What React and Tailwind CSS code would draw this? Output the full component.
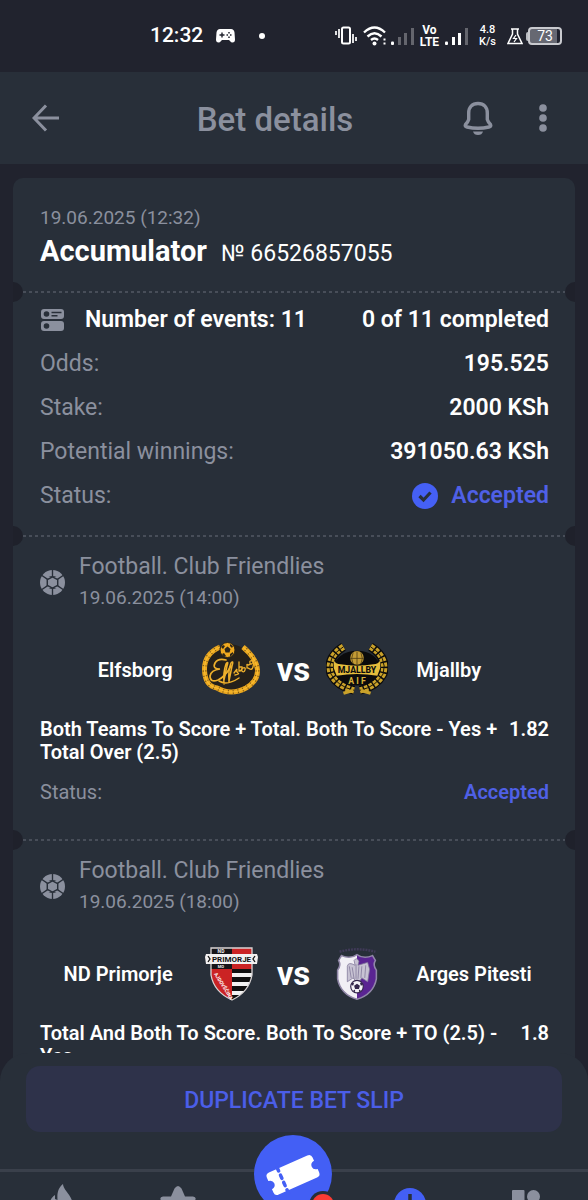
const summary = [
  { label: "Odds:", value: "195.525" },
  { label: "Stake:", value: "2000 KSh" },
  { label: "Potential winnings:", value: "391050.63 KSh" },
];

const events = [
  {
    league: "Football. Club Friendlies",
    date: "19.06.2025 (14:00)",
    home: "Elfsborg",
    away: "Mjallby",
    HomeLogo: ElfsborgLogo,
    AwayLogo: MjallbyLogo,
    market: "Both Teams To Score + Total. Both To Score - Yes + Total Over (2.5)",
    odds: "1.82",
    status: "Accepted",
  },
  {
    league: "Football. Club Friendlies",
    date: "19.06.2025 (18:00)",
    home: "ND Primorje",
    away: "Arges Pitesti",
    HomeLogo: PrimorjeLogo,
    AwayLogo: ArgesLogo,
    market: "Total And Both To Score. Both To Score + TO (2.5) - Yes",
    odds: "1.8",
    status: "Accepted",
  },
];

export default function App() {
  return (
    <div className="flex h-screen flex-col overflow-hidden bg-[#21232e] font-[Roboto,sans-serif] text-white">
      <StatusBar />
      <Header />
      <main className="min-h-0 flex-1 overflow-y-auto px-[13px] pt-[14px] [scrollbar-width:none]">
        <div className="rounded-t-[10px] bg-[#282f39]">
          <section className="pt-[27px] pr-[26px] pb-5 pl-[27px]">
            <div className="text-[19px] leading-[26px] text-[#8b909e]">
              19.06.2025 (12:32)
            </div>
            <div className="mt-0.5 flex items-baseline gap-[14px] leading-9">
              <h2 className="text-[29px] font-bold">Accumulator</h2>
              <span className="text-[23px]">№ 66526857055</span>
            </div>
          </section>
          <Divider />
          <section className="flex flex-col gap-4 pt-[14px] pr-[26px] pb-[26px] pl-[27px] text-[23px] leading-7">
            <div className="flex items-center justify-between font-semibold">
              <div className="flex items-center gap-[19px]">
                <EventsIcon />
                <span>Number of events: 11</span>
              </div>
              <span>0 of 11 completed</span>
            </div>
            {summary.map((row) => (
              <div key={row.label} className="flex justify-between">
                <span className="text-[#8b909e]">{row.label}</span>
                <span className="font-semibold">{row.value}</span>
              </div>
            ))}
            <div className="flex justify-between">
              <span className="text-[#8b909e]">Status:</span>
              <span className="flex items-center gap-[13px] font-semibold text-[#4f60e6]">
                <CheckIcon />
                Accepted
              </span>
            </div>
          </section>
          {events.map((event) => (
            <EventCard key={event.date} event={event} />
          ))}
        </div>
      </main>
      <Footer />
    </div>
  );
}

function Divider() {
  return (
    <div className="relative h-0">
      <div className="absolute -top-px right-[10px] left-[10px] h-[2px] bg-[repeating-linear-gradient(90deg,#484e59_0_3px,transparent_3px_6px)]" />
      <div className="absolute -top-[10px] left-0 h-5 w-[10px] rounded-r-full bg-[#1f212b]" />
      <div className="absolute -top-[10px] right-0 h-5 w-[10px] rounded-l-full bg-[#1f212b]" />
    </div>
  );
}

function EventCard({ event }) {
  const { HomeLogo, AwayLogo } = event;
  return (
    <>
      <Divider />
      <section className="pt-[17px] pr-[26px] pb-9 pl-[27px]">
        <div className="flex items-center gap-[14px] text-[#8b909e]">
          <BallIcon />
          <div>
            <div className="text-[23px] leading-7">{event.league}</div>
            <div className="mt-1 text-[19px] leading-[26px]">{event.date}</div>
          </div>
        </div>
        <div className="mt-[27px] grid h-16 grid-cols-[1fr_auto_1fr] items-center gap-7 text-[20px] font-semibold">
          <span className="text-right">{event.home}</span>
          <div className="flex items-center gap-4">
            <HomeLogo />
            <span className="text-[33px] leading-8 font-bold">vs</span>
            <AwayLogo />
          </div>
          <span>{event.away}</span>
        </div>
        <div className="mt-4 flex justify-between gap-2 text-[20px] leading-[23px] font-semibold">
          <p>{event.market}</p>
          <span>{event.odds}</span>
        </div>
        <div className="mt-4 flex justify-between text-[20px] leading-6">
          <span className="text-[#8b909e]">Status:</span>
          <span className="font-semibold text-[#4f60e6]">{event.status}</span>
        </div>
      </section>
    </>
  );
}

function Header() {
  return (
    <header className="flex h-[92px] shrink-0 items-center bg-[#282f39] pr-10 pl-8 text-[#8b909e]">
      <button type="button" aria-label="Back">
        <svg width="28" height="30" viewBox="0 0 28 30" fill="none" stroke="currentColor" strokeWidth="3">
          <path d="M14 2.500 2 15l12 12.500M2 15h25" />
        </svg>
      </button>
      <h1 className="ml-7 flex-1 pt-[3px] text-center text-[33px] leading-10 font-medium">
        Bet details
      </h1>
      <button type="button" aria-label="Notifications">
        <svg width="32" height="34" viewBox="0 0 32 34" fill="none">
          <path
            d="M16 2.500c-6 0-9.300 4-9.300 9.500v6.500Q6 21 3.500 23.500q-1 2 1.500 2.500 11 2.500 22 0 2.500-.5 1.500-2.500Q26 21 25.300 18.500V12c0-5.500-3.300-9.500-9.300-9.500Z"
            stroke="currentColor"
            strokeWidth="3.400"
            strokeLinejoin="round"
          />
          <path d="M11 30.500h10q-1 3.500-5 3.500t-5-3.500Z" fill="currentColor" />
        </svg>
      </button>
      <button type="button" aria-label="More" className="ml-11">
        <svg width="10" height="28" viewBox="0 0 10 28" fill="currentColor">
          <circle cx="5" cy="4" r="3.800" />
          <circle cx="5" cy="14" r="3.800" />
          <circle cx="5" cy="24" r="3.800" />
        </svg>
      </button>
    </header>
  );
}

function StatusBar() {
  return (
    <div className="flex h-[72px] shrink-0 items-center justify-between pr-[26px] pl-[150px]">
      <div className="flex items-center">
        <span className="text-[21px] font-medium">12:32</span>
        <svg className="ml-[13px]" width="19" height="14" viewBox="0 0 19 14">
          <path d="M4 0h11q3 0 3.500 3.500l.5 7q0 3-2.500 3-1.500 0-2.500-1.500l-1-1h-7L5 12q-1 1.500-2.500 1.500-2.500 0-2.500-3l.5-7Q1 0 4 0Z" fill="#fff" />
          <path d="M6 3.500v5M3.500 6h5" stroke="#21232e" strokeWidth="1.400" />
          <path d="M13 3v1.500M13 7.500V9M10.500 6H12M14 6h1.500" stroke="#21232e" strokeWidth="1.500" />
        </svg>
        <span className="ml-6 size-[6px] rounded-full bg-white" />
      </div>
      <div className="flex items-center">
        <svg width="22" height="20" viewBox="0 0 22 20" fill="none" stroke="#fff">
          <rect x="7" y="1.500" width="8" height="16" rx="1.500" strokeWidth="2" />
          <path d="M1 5v4M4 3v9M18 8v9M21 11v4" strokeWidth="1.700" />
        </svg>
        <svg className="ml-[6px]" width="25" height="20" viewBox="0 0 25 20" fill="none" stroke="#fff" strokeWidth="2.400">
          <path d="M1 6.500q10.500-10 21 0M4.500 10.500q7-6.500 14 0M8 14q3.500-3 7 0" />
          <circle cx="11.500" cy="17.500" r="2" fill="#fff" stroke="none" />
          <path d="M20.500 13.500h2M20.500 17.500h2" strokeWidth="2" />
        </svg>
        <Signal active={1} className="ml-[3px]" />
        <div className="ml-[6px] text-center text-[12px] leading-3 font-bold">
          <div>Vo</div>
          <div>LTE</div>
        </div>
        <Signal active={3} className="ml-[6px]" />
        <div className="ml-[11px] text-center text-[11px] leading-3 font-medium">
          <div>4.8</div>
          <div>K/s</div>
        </div>
        <svg className="ml-[11px]" width="16" height="17" viewBox="0 0 16 17" fill="none" stroke="#fff" strokeWidth="1.500">
          <path d="M4 1h8M5.500 1v5L1 15.500h14L10.500 6V1" />
          <path d="m9 7-2.500 3.500h3L7 14" strokeWidth="1.200" />
        </svg>
        <span className="ml-[3px] h-[9px] w-[2px] rounded-l bg-[#b9bbc1]" />
        <div className="flex h-[18px] w-[34px] items-center justify-center rounded-[4px] border-2 border-[#c9cacf] bg-linear-to-r from-[#666872] from-90% to-transparent to-90% text-[14px]">
          73
        </div>
      </div>
    </div>
  );
}

function Signal({ active, className }) {
  return (
    <svg className={className} width="23" height="18" viewBox="0 0 23 18" fill="#fff">
      <rect x="0" y="14.500" width="3" height="3.500" rx="1" />
      <rect x="7" y="10" width="3" height="8" opacity={active > 1 ? 1 : 0.3} />
      <rect x="13" y="6" width="3" height="12" opacity={active > 2 ? 1 : 0.3} />
      <rect x="20" y="1" width="3" height="17" opacity="0.3" />
    </svg>
  );
}

function Footer() {
  return (
    <footer className="relative -mt-7 shrink-0 text-[#8b909e]">
      <div className="rounded-t-[28px] bg-[#282f39] px-[26px] pt-[13px] pb-[37px]">
        <button
          type="button"
          className="h-[66px] w-full rounded-[14px] bg-[#2e324a] pt-1 text-[23px] font-medium text-[#4b5ee8]"
        >
          DUPLICATE BET SLIP
        </button>
      </div>
      <nav className="grid h-[31px] grid-cols-5 justify-items-center border-t-[3px] border-[#3a404b] bg-[#282f39] px-1">
        <a href="#popular" aria-label="Popular" className="h-7 overflow-hidden pt-3">
          <svg width="30" height="36" viewBox="0 0 30 36" fill="currentColor">
            <path d="M16 0c-5 4-6 9-5.500 16L8 15V11c-4 3-6 7-6 12 0 7 5 11 12 11s12-5 12-12C26 12 16 6 16 0Z" />
          </svg>
        </a>
        <a href="#favorites" aria-label="Favorites" className="h-7 overflow-hidden pt-[14px]">
          <svg width="38" height="36" viewBox="0 0 38 36" fill="currentColor">
            <path d="M15.500 2.500q3.500-5 7 0L26 10.500h8q4 .5 2 4l-8 6.500 3 11-12-6-12 6 3-11-8-6.500q-2-3.500 2-4h8Z" />
          </svg>
        </a>
        <a
          href="#slip"
          aria-label="Bet slip"
          className="relative -mt-[37px] h-[65px] w-20 overflow-hidden"
        >
          <svg width="80" height="80" viewBox="0 0 80 80">
            <circle cx="39" cy="39" r="39" fill="#435ff5" />
            <g transform="rotate(-24 39 40)">
              <path d="M18 28h42q4 0 4 4v3.500q-4.500.5-4.500 4.500t4.500 4.500V48q0 4-4 4H18q-4 0-4-4v-3.500q4.500-.5 4.500-4.500T14 35.500V32q0-4 4-4Z" fill="#fff" />
              <path d="M27.500 27v28" stroke="#435ff5" strokeWidth="3.500" strokeDasharray="3.500 4.500" strokeLinecap="round" />
            </g>
            <circle cx="69" cy="70" r="14" fill="#282f39" />
            <circle cx="69" cy="70" r="11" fill="#fb3b34" />
          </svg>
        </a>
        <a href="#history" aria-label="History" className="h-7 overflow-hidden pt-4">
          <svg width="32" height="32" viewBox="0 0 32 32">
            <circle cx="16" cy="16" r="16" fill="#435ff5" />
            <path d="M16 6v11l7 5" stroke="#282f39" strokeWidth="3.500" fill="none" />
          </svg>
        </a>
        <a href="#menu" aria-label="Menu" className="h-7 overflow-hidden pt-[18px]">
          <svg width="28" height="28" viewBox="0 0 28 28" fill="currentColor">
            <rect width="12.500" height="12.500" rx="1" />
            <circle cx="21.500" cy="6.500" r="6.500" />
            <rect y="15" width="12.500" height="12.500" rx="1" />
            <rect x="15" y="15" width="12.500" height="12.500" rx="1" />
          </svg>
        </a>
      </nav>
    </footer>
  );
}

function EventsIcon() {
  return (
    <svg width="26" height="24" viewBox="0 0 26 24">
      <rect x="1" y="1" width="23" height="10" rx="3" fill="#8b909e" />
      <rect x="1" y="13" width="23" height="10" rx="3" fill="#8b909e" />
      <circle cx="6.500" cy="6" r="2.800" fill="#282f39" />
      <circle cx="6.500" cy="18" r="2.800" fill="#282f39" />
      <path d="M11.500 4.500h10M11.500 7.700h6" stroke="#282f39" strokeWidth="1.600" />
    </svg>
  );
}

function CheckIcon() {
  return (
    <svg width="26" height="26" viewBox="0 0 26 26">
      <circle cx="13" cy="13" r="13" fill="#4560f5" />
      <path d="m7.500 13 4 4 7-7.500" fill="none" stroke="#282f39" strokeWidth="3.200" />
    </svg>
  );
}

function BallIcon() {
  return (
    <svg width="25" height="25" viewBox="0 0 24 24">
      <circle cx="12" cy="12" r="12" fill="#8b909e" />
      <path d="M12 0v7M12 17v7M16 9.500 22.500 5M8 9.500 1.500 5M16 14.500l6.500 4.500M8 14.500 1.500 19" stroke="#282f39" strokeWidth="1.300" />
      <path d="m12 7.500-3.800-1.500h7.600ZM12 16.500l-3.800 1.500h7.600Z" fill="#282f39" />
      <path d="M12 6.500 17 9.300v5.400L12 17.500l-5-2.800V9.300Z" fill="#8b909e" stroke="#282f39" strokeWidth="1.400" />
    </svg>
  );
}

function ElfsborgLogo() {
  return (
    <svg width="60" height="56" viewBox="0 0 60 56">
      <path d="M11 11Q30-6 49 11 62 24 56 36 47 52 30 51 13 52 4 36-2 24 11 11Z" fill="#24201b" />
      <path d="M19 5Q3 12 3.500 28T16 46Q30 54 45 46 57 39 56.500 28T42 5" fill="none" stroke="#eba820" strokeWidth="5" />
      <path d="M19 5Q3 12 3.500 28T16 46Q30 54 45 46 57 39 56.500 28T42 5" fill="none" stroke="#7c5614" strokeWidth="4" strokeDasharray="1 4" />
      <path d="M19 5Q3 12 3.500 28T16 46Q30 54 45 46 57 39 56.500 28T42 5" fill="none" stroke="#f9bb30" strokeWidth="1.200" />
      <circle cx="26.500" cy="8" r="7.500" fill="#efa91f" stroke="#2b2418" />
      <path d="m26.500 4.500 3 2.500-1 3.500h-4l-1-3.500ZM20 5l2-2 2 1-2 3ZM29 2l3 2-1 2-2-2ZM21 12l2-1 2 3-2 1ZM29 12l3-2v2l-3 3Z" fill="#2b2418" />
      <g fill="none" stroke="#eeb02c" strokeLinecap="round">
        <path d="M25 18q-8-2-11 3-3 6 5 6-9 1-10 7 0 7 8 4 7-3 13-14" strokeWidth="1.700" />
        <path d="M23 42q-1-12 2-20 3-4 1 2l-3 14M28 40q-1-12 2-19 3-3 1 3l-3 15M18 39q8 5 20-3" strokeWidth="1.500" />
        <path d="m33 31 3-4q-1 3 1 4t-3 2M38 20v9q4 0 3-4h-3M42 26q3-1 2 2t-3 1 1-3M46 26v-4q1 2 3 0M52 19q-4-1-3 2t4-2l-1 6q-1 4-5 1" strokeWidth="1.300" />
      </g>
    </svg>
  );
}

function MjallbyLogo() {
  return (
    <svg width="62" height="56" viewBox="0 0 64 56">
      <g fill="none">
        <path d="M18 4Q0 15 5 32 12 45 29 49M46 4Q64 15 59 32 52 45 35 49" stroke="#0b0b0c" strokeWidth="9" />
        <path d="M18 4Q0 15 5 32 12 45 29 49M46 4Q64 15 59 32 52 45 35 49" stroke="#c9a12a" strokeWidth="6.500" strokeDasharray="4 1.500" />
        <path d="M18 4Q0 15 5 32 12 45 29 49M46 4Q64 15 59 32 52 45 35 49" stroke="#171406" strokeWidth="1" />
        <path d="m18 52 10-3M46 52l-10-3" stroke="#c9a12a" strokeWidth="3.500" />
      </g>
      <ellipse cx="32" cy="26" rx="24" ry="18" fill="#0b0b0c" />
      <circle cx="32" cy="15.500" r="7" fill="#c39b35" />
      <path d="M32 9v14M25 16h14M28 10q-3 6 0 12M36 10q3 6 0 12" stroke="#4b3a12" strokeWidth=".8" fill="none" />
      <path d="M8 18q2 4 7 4 17 3 34 0 5 0 7-4v8l-3 8q-21-4-42 0l-3-8Z" fill="#e5bd3c" />
      <text x="32" y="31" textAnchor="middle" fontSize="9" fontWeight="800" fill="#0b0b0c">MJALLBY</text>
      <text x="32" y="42" textAnchor="middle" fontSize="9" fontWeight="700" fill="#d9b23a">A I F</text>
    </svg>
  );
}

function PrimorjeLogo() {
  return (
    <svg width="60" height="56" viewBox="0 0 60 56">
      <defs>
        <clipPath id="primorje">
          <path d="M10 2h41v27q-3 17-20 25Q13 46 10 29Z" />
        </clipPath>
      </defs>
      <g clipPath="url(#primorje)">
        <path d="M10 0h21v56H10Z" fill="#cb2324" />
        <path d="M10 0h21v23H10Z" fill="#171518" />
        <path d="M31 0h21v24H31Z" fill="#cb2324" />
        <path d="M31 23h21v33H31Z" fill="#111" />
        <path d="M31 27h21v4H31ZM31 36h21v4H31ZM31 45h21v4H31Z" fill="#f2f2f2" />
      </g>
      <path d="M10 2h41v27q-3 17-20 25Q13 46 10 29Z" fill="none" stroke="#d9d4d4" strokeWidth="1.300" />
      <path d="M5 8h51l1 3-1 7H5l-1-7Z" fill="#f2f0f0" />
      <path d="m7 10 2 3-2 3M54 10l-2 3 2 3" stroke="#111" fill="none" strokeWidth="1.300" />
      <text x="30.500" y="16" textAnchor="middle" fontSize="8" fontWeight="700" fill="#111">PRIMORJE</text>
      <text x="20" y="7" textAnchor="middle" fontSize="5" fontWeight="700" fill="#eee">ND</text>
      <text x="20" y="22" textAnchor="middle" fontSize="4" fontWeight="700" fill="#eee">MO</text>
      <text transform="translate(13 28) rotate(58)" fontSize="5" fontWeight="700" fill="#fff">AJDOVŠČINA</text>
    </svg>
  );
}

function ArgesLogo() {
  return (
    <svg width="62" height="56" viewBox="0 0 64 56">
      <path d="M14 5q18-5 37 0" stroke="#403a58" strokeWidth="2.500" strokeDasharray="2 1" fill="none" />
      <path d="M16 9q9 4 16-1v46Q15 49 12 33V24q4-5 1-10Z" fill="#f1eff5" />
      <path d="M48 9q-9 4-16-1v46q17-5 20-21V24q-4-5-1-10Z" fill="#5a2492" />
      <path d="M16 9q9 4 16-1 7 5 16 1l3 5q-3 5 1 10v9Q49 49 32 54 15 49 12 33V24q4-5 1-10Z" fill="none" stroke="#9187a8" strokeWidth="1.600" />
      <path d="M29 14q3-4 5 1l-1 4 10-3 2 7-2 13-6-4-4 6-5-6-6 4 0-16q1-5 8-1Z" fill="#c7c2d3" stroke="#81799a" strokeWidth=".8" />
      <path d="m24 20 2 12M27 21l2 12M37 20l-1 12M41 19l-1 13M31 18v15M34 20l-1 13" stroke="#81799a" strokeWidth=".8" />
      <circle cx="32" cy="41" r="6.500" fill="#f5f3f7" stroke="#34264b" strokeWidth="1.200" />
      <path d="m32 38 3 2-1 3.500h-4L29 40ZM26 39l1-2 2 0-1 3ZM38 39l-1-2-2 0 1 3ZM28 45l2-1 0 3ZM36 45l-2-1 0 3Z" fill="#34264b" />
    </svg>
  );
}
